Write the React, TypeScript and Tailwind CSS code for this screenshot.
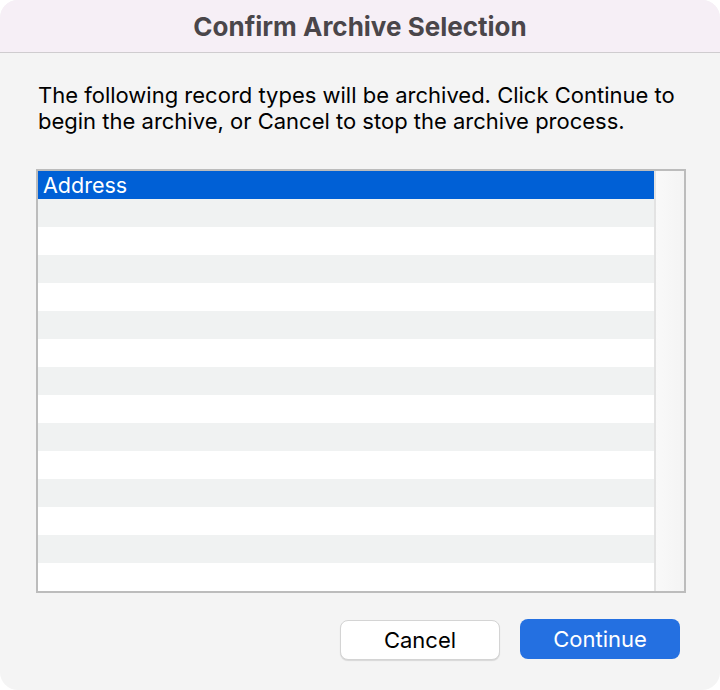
import React from "react";

export default function App() {
  const rows = Array.from({ length: 15 }, (_, i) => i);
  return (
    <div className="w-[720px] h-[690px] bg-white" style={{ fontFamily: "Inter, 'Noto Sans', sans-serif" }}>
      <div className="w-full h-full rounded-[18px] bg-[#f4f4f4] overflow-hidden flex flex-col">
        <div className="h-[53px] shrink-0 bg-[#f6eff6] border-b border-[#cfcccf] flex items-center justify-center">
          <span className="text-[26px] font-bold text-[#4a464a] pt-[1px]">Confirm Archive Selection</span>
        </div>
        <div className="pl-[38px] pr-[10px] pt-[29px] text-[22px] leading-[26px] text-black">
          <p className="whitespace-nowrap">The following record types will be archived. Click Continue to</p>
          <p className="whitespace-nowrap">begin the archive, or Cancel to stop the archive process.</p>
        </div>
        <div className="ml-[36px] mt-[35px] w-[650px] h-[424px] border-2 border-[#bcbcbc] bg-white flex">
          <div className="w-[616px] flex flex-col">
            {rows.map((i) => (
              <div
                key={i}
                className={
                  i === 0
                    ? "h-[28px] shrink-0 bg-[#0060d6] text-white text-[21.5px] leading-[28px] pl-[5px]"
                    : i % 2 === 1
                    ? "h-[28px] shrink-0 bg-[#f0f2f2]"
                    : "h-[28px] shrink-0 bg-white"
                }
              >
                {i === 0 ? "Address" : null}
              </div>
            ))}
          </div>
          <div className="flex-1 border-l-2 border-[#e3e3e3] bg-gradient-to-r from-[#f9f9f9] to-[#f4f4f4]" />
        </div>
        <div className="flex justify-end gap-[20px] pr-[40px] mt-[27px]">
          <button className="w-[160px] h-[40px] rounded-[8px] bg-white border border-[#d4d4d4] shadow-[0_1px_1px_rgba(0,0,0,0.12)] text-[22px] text-black">
            Cancel
          </button>
          <button className="w-[160px] h-[40px] rounded-[8px] bg-[#2470e1] text-[22px] text-white -mt-[1px]">
            Continue
          </button>
        </div>
      </div>
    </div>
  );
}
